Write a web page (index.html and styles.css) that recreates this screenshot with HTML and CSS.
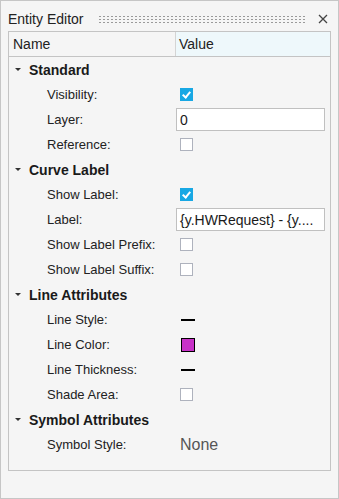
FILE: index.html
```html
<!DOCTYPE html>
<html lang="en">
<head>
    <meta charset="UTF-8">
    <title>Entity Editor</title>
    <link rel="stylesheet" href="styles.css">
</head>
<body>
    <div class="panel">
        <div class="title-bar">
            <span class="title">Entity Editor</span>
            <div class="grip"></div>
            <span class="close">
                <svg width="10" height="10" viewBox="0 0 10 10"><path d="M1 1 L9 9 M9 1 L1 9" stroke="#444" stroke-width="1.3"/></svg>
            </span>
        </div>

        <div class="grid-box">
            <div class="grid-header">
                <div class="head-name">Name</div>
                <div class="head-value">Value</div>
            </div>

            <div class="row section"><span class="arrow"></span>Standard</div>
            <div class="row"><div class="name">Visibility:</div><div class="value"><span class="check on"></span></div></div>
            <div class="row"><div class="name">Layer:</div><div class="value"><div class="field">0</div></div></div>
            <div class="row"><div class="name">Reference:</div><div class="value"><span class="check"></span></div></div>

            <div class="row section"><span class="arrow"></span>Curve Label</div>
            <div class="row"><div class="name">Show Label:</div><div class="value"><span class="check on"></span></div></div>
            <div class="row"><div class="name">Label:</div><div class="value"><div class="field">{y.HWRequest} - {y....</div></div></div>
            <div class="row"><div class="name">Show Label Prefix:</div><div class="value"><span class="check"></span></div></div>
            <div class="row"><div class="name">Show Label Suffix:</div><div class="value"><span class="check"></span></div></div>

            <div class="row section"><span class="arrow"></span>Line Attributes</div>
            <div class="row"><div class="name">Line Style:</div><div class="value"><span class="dash"></span></div></div>
            <div class="row"><div class="name">Line Color:</div><div class="value"><span class="swatch"></span></div></div>
            <div class="row"><div class="name">Line Thickness:</div><div class="value"><span class="dash"></span></div></div>
            <div class="row"><div class="name">Shade Area:</div><div class="value"><span class="check"></span></div></div>

            <div class="row section"><span class="arrow"></span>Symbol Attributes</div>
            <div class="row"><div class="name">Symbol Style:</div><div class="value"><span class="plain">None</span></div></div>
        </div>
    </div>
</body>
</html>
```

FILE: styles.css
```css
* {
    margin: 0;
    padding: 0;
    box-sizing: border-box;
}

body {
    background: #f5f5f5;
    font-family: 'Liberation Sans', Arial, sans-serif;
    color: #222;
}

.panel {
    width: 339px;
    height: 499px;
    border: 1px solid #c6c6c6;
    background: #f5f5f5;
}

/* barra de titulo */
.title-bar {
    display: flex;
    align-items: center;
    height: 30px;
    padding: 6px 10px 0 7px;
}

.title {
    font-size: 14px;
    color: #222;
}

.grip {
    flex: 1;
    height: 9px;
    margin: 0 11px 0 15px;
    background-image: radial-gradient(circle, #9a9a9a 0.8px, transparent 1px);
    background-size: 4px 3px;
    background-position: 0 0;
}

.close {
    display: flex;
    width: 10px;
    height: 10px;
}

/* tabela de propriedades */
.grid-box {
    margin-left: 7px;
    width: 323px;
    height: 440px;
    border: 1px solid #c4c4c4;
}

.grid-header {
    display: flex;
    height: 25px;
    border-bottom: 1px solid #c4c4c4;
    font-size: 14px;
}

.head-name {
    width: 167px;
    padding: 4px 0 0 4px;
    border-right: 1px solid #d4d4d4;
}

.head-value {
    flex: 1;
    padding: 4px 0 0 3px;
    background: #eef8fb;
}

.row {
    display: flex;
    align-items: center;
    height: 25px;
    font-size: 13px;
}

.section {
    font-weight: bold;
    font-size: 14px;
    color: #1a1a1a;
    padding-left: 6px;
}

.arrow {
    width: 0;
    height: 0;
    border-left: 3px solid transparent;
    border-right: 3px solid transparent;
    border-top: 3px solid #333;
    margin-right: 8px;
}

.name {
    width: 167px;
    padding-left: 38px;
}

.value {
    flex: 1;
    display: flex;
    align-items: center;
}

.check {
    width: 13px;
    height: 13px;
    margin-left: 4px;
    background: #fff;
    border: 1px solid #aeb2bd;
    position: relative;
}

.check.on {
    background: #18a8e4;
    border-color: #18a8e4;
}

.check.on::after {
    content: "";
    position: absolute;
    left: 3px;
    top: 1px;
    width: 3px;
    height: 6px;
    border-right: 2px solid #fff;
    border-bottom: 2px solid #fff;
    transform: rotate(40deg);
}

.field {
    width: 149px;
    height: 23px;
    background: #fff;
    border: 1px solid #c0c0c0;
    padding: 3px 0 0 3px;
    font-size: 14px;
    white-space: nowrap;
    overflow: hidden;
    color: #1a1a1a;
}

.dash {
    width: 14px;
    height: 2px;
    margin-left: 5px;
    background: #000;
}

.swatch {
    width: 14px;
    height: 14px;
    margin-left: 5px;
    background: #c832c8;
    border: 1px solid #000;
}

.plain {
    margin-left: 4px;
    font-size: 16px;
    color: #555;
}
```
